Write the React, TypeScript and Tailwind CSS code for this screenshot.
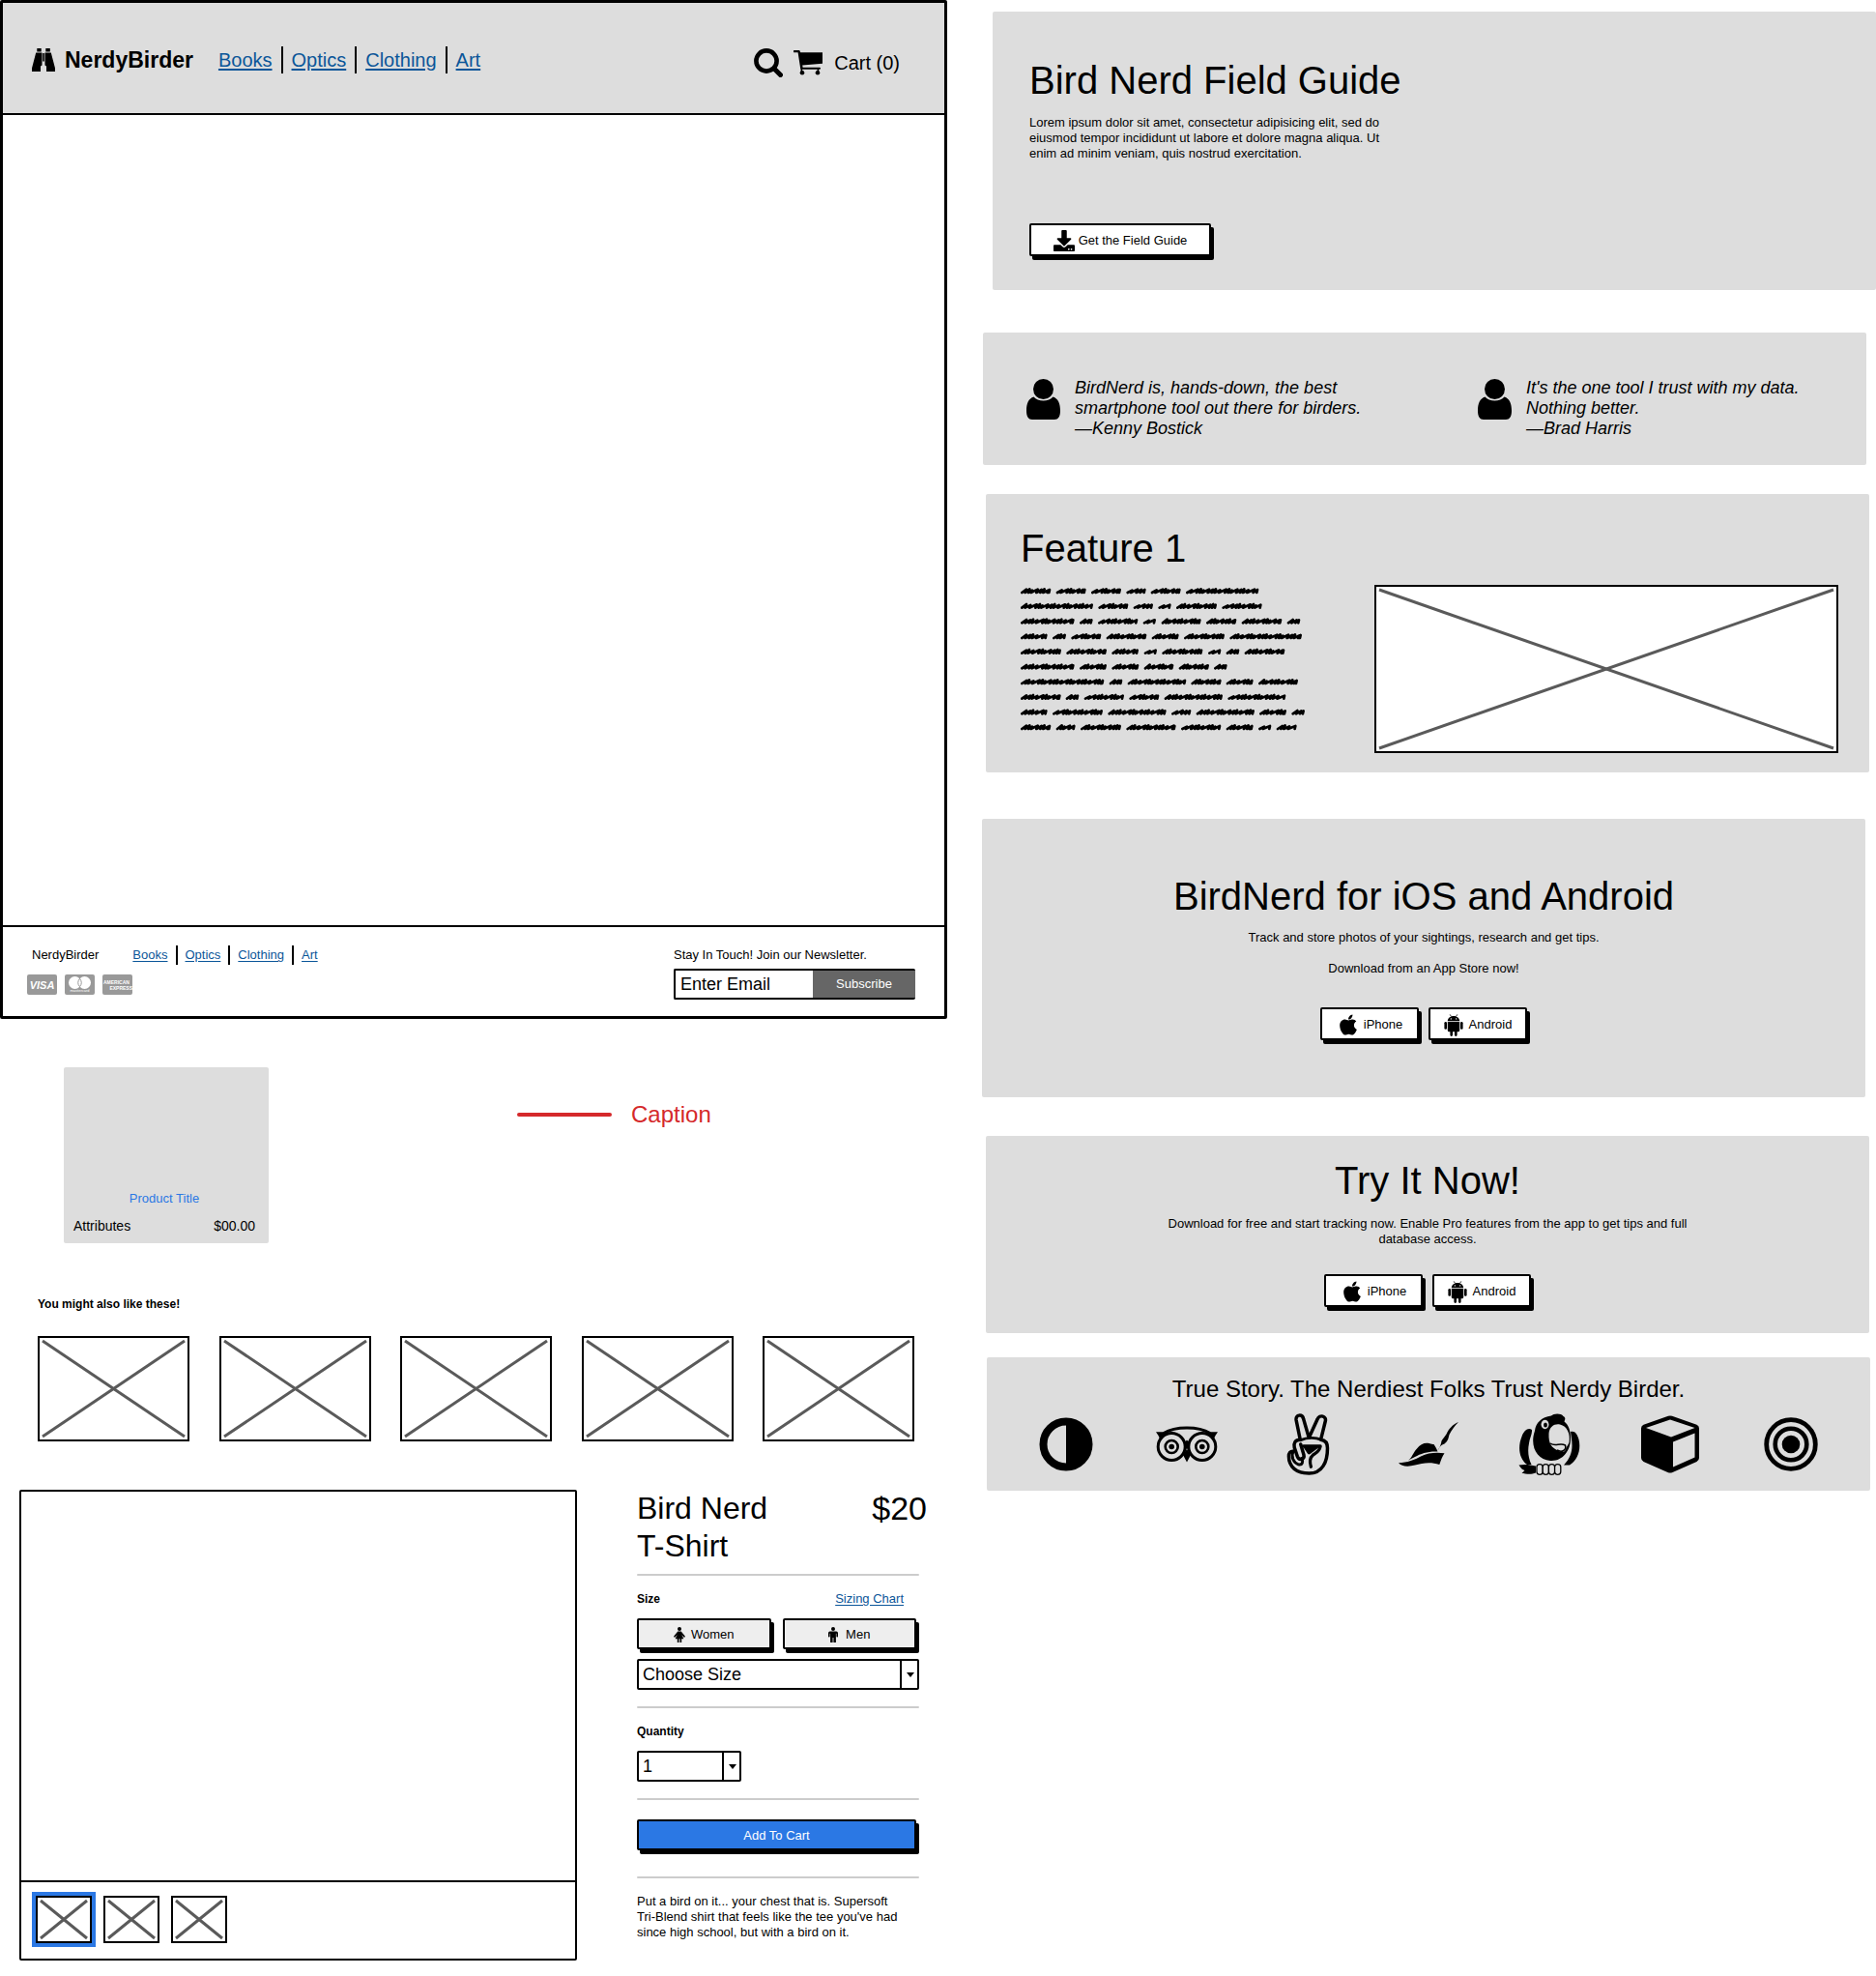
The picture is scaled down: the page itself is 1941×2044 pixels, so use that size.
import type { ReactNode } from "react";
import { FaApple, FaDownload } from "react-icons/fa";

const categories = ["Books", "Optics", "Clothing", "Art"];

function BinocularsIcon() {
  return (
    <svg viewBox="0 0 24 24" className="size-6" fill="currentColor" aria-hidden="true">
      <path d="M5.300 0h4.400v3.500H5.300zM14.300 0h4.500v3.500h-4.500z" />
      <path d="M4.200 4.500h6.300V17.500L9 18.500V24H0v-3.600Z" />
      <path d="M19.800 4.500h-6.300V17.500l1.500 1V24h9v-3.600Z" />
      <path d="M11 5h2v8.500h-2z" fillOpacity="0.8" />
    </svg>
  );
}

function SearchIcon() {
  return (
    <svg viewBox="0 0 30 30" className="size-[30px]" fill="none" stroke="currentColor" strokeLinecap="round" aria-hidden="true">
      <circle cx="13" cy="13" r="10.600" strokeWidth="4.600" />
      <path d="M21 21l6.500 6.500" strokeWidth="5" />
    </svg>
  );
}

function CartIcon() {
  return (
    <svg viewBox="0 0 30 26" className="h-[26px] w-[30px]" fill="currentColor" aria-hidden="true">
      <path d="M0.800 0h5.400l1 2.200H30v11.600L9.200 15.600l.4 2.200H27a1 1 0 0 1 0 2H8.200a1 1 0 0 1-1-.9L4.600 2.200H.8A1.100 1.100 0 0 1 .8 0Z" />
      <path d="M7.600 19h1.600v3H7.600zM24.600 19h1.600v3h-1.600z" />
      <circle cx="9" cy="23.300" r="2.300" />
      <circle cx="25" cy="23.300" r="2.300" />
    </svg>
  );
}

function PersonIcon() {
  return (
    <svg viewBox="0 0 35 42" className="mt-px h-[42px] w-[35px] shrink-0" fill="currentColor" aria-hidden="true">
      <circle cx="17.500" cy="10.500" r="10.500" />
      <path d="M7.500 18.600c2.300 2.500 5.900 4 10 4s7.700-1.500 10-4c5.300 1.600 7.500 7 7.500 14.400 0 6-2.200 9-6 9H6c-3.800 0-6-3-6-9 0-7.400 2.200-12.800 7.500-14.400Z" />
    </svg>
  );
}

function AndroidIcon() {
  return (
    <svg viewBox="0 0 20 23" className="h-[23px] w-5" fill="currentColor" aria-hidden="true">
      <path d="M6.200 0.400l1.300 2.200M13.800 0.400l-1.300 2.200" stroke="currentColor" strokeWidth="0.800" />
      <path fillRule="evenodd" d="M3.800 7.300C3.800 4.300 6.500 2 10 2s6.200 2.300 6.200 5.300ZM7.300 4.200a.7.7 0 1 0 0 1.400.7.7 0 0 0 0-1.400Zm5.400 0a.7.7 0 1 0 0 1.400.7.7 0 0 0 0-1.400Z" />
      <path d="M3.800 8.100h12.400v8.700a1.500 1.500 0 0 1-1.500 1.500h-1.100v3.300a1.300 1.300 0 0 1-2.600 0v-3.300H9v3.300a1.300 1.300 0 0 1-2.600 0v-3.300H5.300a1.500 1.500 0 0 1-1.500-1.500Z" />
      <rect x="0.400" y="8" width="2.600" height="7.800" rx="1.300" />
      <rect x="17" y="8" width="2.600" height="7.800" rx="1.300" />
    </svg>
  );
}

function WomanIcon() {
  return (
    <svg viewBox="0 0 12 16" className="h-4 w-3" fill="currentColor" aria-hidden="true">
      <circle cx="6" cy="2" r="2" />
      <path d="M4.300 4.400h3.400L11.600 9.300a.8.8 0 0 1-1.300 1L8.300 7.900 10.400 12.300H8.200V16H6.500v-3.700h-1V16H3.800v-3.700H1.600L3.700 7.900 1.700 10.300a.8.8 0 0 1-1.300-1Z" />
    </svg>
  );
}

function ManIcon() {
  return (
    <svg viewBox="0 0 10 16" className="h-4 w-2.5" fill="currentColor" aria-hidden="true">
      <circle cx="5" cy="2" r="2" />
      <path d="M1.800 4.400h6.400A1.800 1.800 0 0 1 10 6.200v3.600a.8.8 0 0 1-1.600 0V6.800h-.5V16H5.400v-5h-.8v5H2.100V6.800h-.5v3a.8.8 0 0 1-1.600 0V6.200a1.800 1.800 0 0 1 1.800-1.800Z" />
    </svg>
  );
}

function HalfCircleMark() {
  return (
    <svg viewBox="0 0 56 56" className="size-14" aria-hidden="true">
      <circle cx="28" cy="28" r="23.500" fill="none" stroke="#000" strokeWidth="8" />
      <path d="M28 4a24 24 0 0 1 0 48Z" />
    </svg>
  );
}

function OwlMark() {
  return (
    <svg viewBox="0 0 64 38" className="h-[38px] w-16" aria-hidden="true">
      <g fill="none" stroke="#000">
        <circle cx="16.200" cy="21.500" r="14" strokeWidth="3" />
        <circle cx="47.800" cy="21.500" r="14" strokeWidth="3" />
        <circle cx="16.200" cy="21.500" r="6.500" strokeWidth="2.600" />
        <circle cx="47.800" cy="21.500" r="6.500" strokeWidth="2.600" />
        <path d="M8 7.500C20 0 44 0 56 7.500" strokeWidth="3" />
      </g>
      <circle cx="16.200" cy="21.500" r="2.800" />
      <circle cx="47.800" cy="21.500" r="2.800" />
      <path d="M0 6.300h12L4 14C3.500 11 1.500 8.500 0 6.300ZM64 6.300H52l8 7.700c.5-3 2.500-5.500 4-7.700Z" />
      <path d="M28 30l4 7.500 4-7.500-4-6ZM29 18l3-3.500 3 3.500-3 7Z" />
    </svg>
  );
}

function PeaceMark() {
  return (
    <svg viewBox="0 0 46 66" className="h-16 w-[45px]" fill="none" stroke="#000" strokeWidth="3.600" strokeLinejoin="round" strokeLinecap="round" aria-hidden="true">
      <path d="M14.500 28L10.200 7C9.400 1 16.800 0.500 18 6L23.800 26L33 6C35 0.800 43 2.800 41.300 8.500L36.500 28C41.500 28.500 43.600 31.500 43.600 37C43.600 52 38 64 24 64C10.500 64 2.300 57 2.300 46C2.300 42 4 40.300 7 40.500" />
      <path d="M14.500 28C9 28 7.300 32 8.300 36.500L11.500 46C13.500 51 19.500 49 18.300 44L15 33" />
      <path d="M7 40.500C4.500 46 7 52.500 12.500 54.500C17 55.500 18 51.500 16 48" strokeWidth="3" />
      <path d="M15 28.500C22 25.500 31 25.500 36.500 28" strokeWidth="3" />
      <path d="M18 35H36C35 41 31.500 42 28 44.500C24.500 47.500 24.500 52 26 57" strokeWidth="3.400" />
      <path d="M20 36H32L24 42Z" fill="#000" />
    </svg>
  );
}

function HatMark() {
  return (
    <svg viewBox="0 0 62 46" className="h-[46px] w-[62px]" aria-hidden="true">
      <path d="M62 0C56 2.500 52 7 49.500 12.500C47.500 15.500 46 17 44.500 19.500C44 23 43 26 40.200 29.500L41.500 28C43 24.500 45 23.500 47.500 22.500C51.500 19.500 51.500 16.500 52.500 13C55 8.500 58 3.500 62 0Z" />
      <path d="M10 39.500C14 37 15 31.500 19 27.500C22 23.500 26 21.500 30 21.800C33 22 34.500 23.500 36.500 23C38 25.500 39.500 27.500 40.500 30.500C31 30 23 32.500 17 36Z" />
      <path d="M0 42.300C9 42 17 39 23 35.500C31 31.500 40 31.300 47.500 32.300C45 36 44 39.500 42.300 44C34 41 25 42 17 44.500C10 46.500 3 46 0 42.300Z" />
    </svg>
  );
}

function ParrotMark() {
  return (
    <svg viewBox="0 0 64 64" className="size-16" aria-hidden="true">
      <path d="M14 17C10 14.500 6 17.500 3.500 24C-0.500 34 0 46 9 53L13.500 53C10 46 9.500 38 11 31C11.500 26 14.500 21 14 17Z" />
      <path d="M54 19C58 17.500 61 21 62.500 27C65 37 61.500 48 53 53.500H47C53 47 55.500 41 55.500 33C55.500 28 54.500 23 54 19Z" />
      <path d="M17 18C18 10 24 3.500 34 2.500C36.500 0 44 -0.500 46.500 3C49.500 4.500 48 7 47.500 8.500C52 12 54 18 54 25C54.500 38 46 50 33 49C19 48 11.500 34 17 18Z" />
      <path d="M31.500 21C32 13.500 37.500 10.500 43 11.500C50.500 13 54 21.500 52.500 30C51.500 33 49.500 34.500 49 37C48 41 43.500 40.500 40 38C35 35.500 31 32 31.500 21Z" fill="#ddd" />
      <path d="M33 31C38 35 43 30 48.500 33C50 38 45 41 40 38" fill="none" stroke="#000" strokeWidth="1.500" />
      <ellipse cx="27.500" cy="11.500" rx="4" ry="4.700" fill="#ddd" />
      <ellipse cx="28" cy="12" rx="1.900" ry="2.500" />
      <path d="M0.500 53.500C6 52.500 12 53 18 54.500V61.500C12 64 7 62 3.500 62L6.500 59C4 58.500 2.500 56.500 0.500 53.500Z" />
      <g fill="#ddd" stroke="#000" strokeWidth="1.300">
        <rect x="19" y="52.600" width="6.200" height="10.700" rx="3" />
        <rect x="25.200" y="52.600" width="6.200" height="10.700" rx="3" />
        <rect x="31.400" y="52.600" width="6.200" height="10.700" rx="3" />
        <rect x="37.600" y="52.600" width="6.200" height="10.700" rx="3" />
      </g>
    </svg>
  );
}

function CubeMark() {
  return (
    <svg viewBox="0 0 60 60" className="size-[60px]" aria-hidden="true">
      <path fillRule="evenodd" d="M28 0.800Q30 0 32 0.800L57.500 9.800Q60 11 60 13.500V44Q60 46.500 57.500 48L32 59.200Q30 60 28 59.200L2.500 48Q0 46.500 0 44V13.500Q0 11 2.500 9.800ZM5 13L31 22.500L55.500 13L30 4.500ZM33 27.500V53.500L55.500 43.500V18.500Z" />
    </svg>
  );
}

function TargetMark() {
  return (
    <svg viewBox="0 0 56 56" className="size-14" aria-hidden="true">
      <circle cx="28" cy="28" r="25.300" fill="none" stroke="#000" strokeWidth="4.800" />
      <circle cx="28" cy="28" r="16.300" fill="none" stroke="#000" strokeWidth="4.600" />
      <circle cx="28" cy="28" r="9.300" />
    </svg>
  );
}

/* Crossed-out box that stands for an image. */
function Placeholder({ className }: { className: string }) {
  return (
    <div className={"border-2 border-black bg-white p-[3px] " + className}>
      <svg className="block h-full w-full overflow-visible" aria-hidden="true">
        <line x1="0" y1="0" x2="100%" y2="100%" stroke="#5a5a5a" strokeWidth="3" />
        <line x1="0" y1="100%" x2="100%" y2="0" stroke="#5a5a5a" strokeWidth="3" />
      </svg>
    </div>
  );
}

function SketchButton({ className, children }: { className: string; children: ReactNode }) {
  return (
    <button
      type="button"
      className={
        "flex items-center justify-center rounded-xs border-2 border-black pt-0.5 text-[13px] leading-4 shadow-[3px_4px_0_0_#000] " +
        className
      }
    >
      {children}
    </button>
  );
}

function StoreButtons() {
  return (
    <div className="flex justify-center gap-2.5">
      <SketchButton className="h-[34px] w-[102px] gap-1 bg-white">
        <FaApple className="size-6" />
        iPhone
      </SketchButton>
      <SketchButton className="h-[34px] w-[102px] gap-1.5 bg-white">
        <AndroidIcon />
        Android
      </SketchButton>
    </div>
  );
}

function SketchSelect({ id, className, options }: { id: string; className: string; options: string[] }) {
  return (
    <div className={"relative h-8 " + className}>
      <select
        id={id}
        className="h-full w-full appearance-none rounded-xs border-2 border-black bg-white pr-5 pl-1 text-[18px] leading-6"
      >
        {options.map((o) => (
          <option key={o}>{o}</option>
        ))}
      </select>
      <span className="pointer-events-none absolute inset-y-0 right-0 flex w-5 items-center justify-center border-l-2 border-black">
        <svg viewBox="0 0 8 5" className="h-[5px] w-2" aria-hidden="true">
          <path d="M0 0h8L4 5Z" />
        </svg>
      </span>
    </div>
  );
}

const scribbleWords: [number, number][][] = [
  [[0, 94], [110, 203], [219, 312], [328, 389], [404, 497], [513, 739]],
  [[0, 225], [241, 334], [350, 411], [427, 467], [483, 609], [625, 749]],
  [[0, 167], [183, 224], [240, 364], [380, 420], [437, 560], [576, 670], [686, 811], [827, 868]],
  [[0, 83], [99, 141], [157, 250], [266, 391], [407, 491], [507, 633], [649, 873]],
  [[0, 126], [142, 267], [283, 366], [383, 423], [439, 565], [582, 622], [638, 679], [695, 820]],
  [[0, 167], [183, 267], [283, 367], [383, 475], [491, 585], [600, 641]],
  [[0, 259], [275, 316], [332, 514], [529, 623], [638, 722], [738, 861]],
  [[0, 125], [140, 181], [197, 321], [337, 430], [446, 627], [643, 823]],
  [[0, 83], [99, 255], [271, 452], [468, 529], [545, 726], [741, 825], [841, 882]],
  [[0, 94], [110, 170], [186, 312], [328, 482], [498, 622], [638, 722], [738, 778], [794, 857]],
];

const strides = [9, 13, 19, 10, 8, 17, 12];
const lifts = [4, 6, 3, 5, 6, 2, 5];

function scribblePath() {
  let d = "";
  scribbleWords.forEach((line, row) => {
    const y = 19 + row * 47;
    line.forEach(([start, end]) => {
      let x = start + 4;
      let i = end - start;
      d += `M${x} ${y + 5}`;
      while (x + 20 <= end) {
        d += `L${x + 14} ${y - lifts[i % lifts.length]}L${x + 10} ${y + 5}`;
        x += strides[i % strides.length];
        i += 1;
      }
      d += `L${end - 4} ${y - 4}L${end - 6} ${y + 5}`;
    });
  });
  return d;
}

function Scribble() {
  return (
    <svg viewBox="0 0 885 465" className="mr-[71px] w-[295px] shrink-0 self-start" role="img" aria-label="Feature text">
      <path d={scribblePath()} fill="none" stroke="#000" strokeWidth="8" strokeLinecap="round" strokeLinejoin="round" />
    </svg>
  );
}

function PaymentCards() {
  return (
    <div className="mt-2.5 -ml-px flex gap-2 pl-1 text-white">
      <span className="-ml-1 flex h-[21px] w-[31px] items-center justify-center rounded-xs bg-[#999] text-[11px] leading-3 font-bold italic">
        VISA
      </span>
      <span className="flex h-[21px] w-[31px] flex-col items-center rounded-xs bg-[#999] pt-0.5">
        <svg viewBox="0 0 23 13" className="h-[13px] w-[23px] shrink-0" aria-hidden="true">
          <circle cx="6.500" cy="6.500" r="6.500" fill="#fff" />
          <circle cx="16.500" cy="6.500" r="6.500" fill="#fff" />
          <path d="M11.500 2.300a6.500 6.500 0 0 1 0 8.400a6.500 6.500 0 0 1 0-8.400Z" fill="#fff" stroke="#999" />
        </svg>
        <span className="text-[4px] leading-[4px]">mastercard</span>
      </span>
      <span className="flex h-[21px] w-[31px] flex-col justify-center overflow-hidden rounded-xs bg-[#999] text-[5px] leading-[6px] font-bold">
        <span className="pl-px">AMERICAN</span>
        <span className="self-end">EXPRESS</span>
      </span>
    </div>
  );
}

function SiteFrame() {
  return (
    <div className="flex flex-col rounded-xs border-[3px] border-black bg-white">
      <header className="flex h-[116px] items-center justify-between border-b-2 border-black bg-[#ddd] pt-1 pr-[46px] pl-[30px]">
        <div className="flex items-center">
          <BinocularsIcon />
          <span className="ml-2.5 text-[23px] leading-7 font-bold">NerdyBirder</span>
          <nav className="ml-[17px] flex items-center divide-x-2 divide-black">
            {categories.map((c) => (
              <span key={c} className="px-[9px] text-[20px] leading-7">
                <a href="#" className="text-[#0b5699] underline underline-offset-2">
                  {c}
                </a>
              </span>
            ))}
          </nav>
        </div>
        <div className="flex items-center pt-1.5">
          <button type="button" aria-label="Search">
            <SearchIcon />
          </button>
          <a href="#" className="ml-[11px] flex items-center gap-3 text-[20px] leading-7">
            <CartIcon />
            Cart (0)
          </a>
        </div>
      </header>
      <main className="min-h-[838px]" />
      <footer className="flex h-[94px] items-start justify-between border-t-2 border-black pt-[19px] pr-[30px] pl-[26px] text-[13px] leading-5">
        <div>
          <div className="flex items-center pl-1">
            <span>NerdyBirder</span>
            <nav className="ml-[27px] flex items-center divide-x-2 divide-black">
              {categories.map((c) => (
                <span key={c} className="px-2">
                  <a href="#" className="text-[#0b5699] underline underline-offset-2">
                    {c}
                  </a>
                </span>
              ))}
            </nav>
          </div>
          <PaymentCards />
        </div>
        <form>
          <label htmlFor="email" className="block">
            Stay In Touch! Join our Newsletter.
          </label>
          <div className="mt-1 flex h-8 w-[250px] rounded-xs border-y-2 border-l-2 border-black">
            <input
              id="email"
              type="text"
              defaultValue="Enter Email"
              className="min-w-0 flex-1 px-[5px] text-[18px] leading-6 outline-none"
            />
            <button type="button" className="w-[106px] bg-[#666] text-white">
              Subscribe
            </button>
          </div>
        </form>
      </footer>
    </div>
  );
}

function ProductCardRow() {
  return (
    <div className="mt-[50px] flex items-start pl-[66px]">
      <article className="w-[212px] rounded-xs bg-[#ddd] pt-[126px] pr-3.5 pb-2 pl-2.5">
        <h3 className="text-center text-[13px] leading-5 text-[#2b78e4]">Product Title</h3>
        <div className="mt-2 flex justify-between text-[14px] leading-5">
          <span>Attributes</span>
          <span>$00.00</span>
        </div>
      </article>
      <div className="mt-[37px] ml-[257px] flex items-center gap-5 text-[#d5292b]">
        <span className="h-1 w-[98px] rounded-full bg-[#d5292b]" />
        <span className="text-[24px] leading-6">Caption</span>
      </div>
    </div>
  );
}

function Related() {
  return (
    <section className="mt-[53px] pr-[34px] pl-[39px]">
      <h3 className="text-[12px] leading-5 font-bold">You might also like these!</h3>
      <div className="mt-[23px] flex justify-between">
        {[1, 2, 3, 4, 5].map((n) => (
          <Placeholder key={n} className="h-[109px] w-[157px]" />
        ))}
      </div>
    </section>
  );
}

function Rule({ className }: { className: string }) {
  return <hr className={"h-0.5 rounded-full border-0 bg-[#ccc] " + className} />;
}

function ProductDetail() {
  return (
    <section className="mt-[50px] mb-4 flex items-start pr-[29px] pl-5">
      <div className="mr-[62px] flex h-[487px] flex-1 flex-col rounded-xs border-2 border-black bg-white">
        <div className="flex-1" />
        <div className="flex h-[81px] gap-3 border-t-2 border-black pt-3.5 pl-[15px]">
          <Placeholder className="h-[49px] w-[58px] ring-4 ring-[#2b78e4]" />
          <Placeholder className="h-[49px] w-[58px]" />
          <Placeholder className="h-[49px] w-[58px]" />
        </div>
      </div>
      <div className="w-[292px]">
        <div className="-mr-2 flex items-start justify-between leading-[39px]">
          <h2 className="text-[32px]">
            Bird Nerd
            <br />
            T-Shirt
          </h2>
          <span className="text-[34px]">$20</span>
        </div>
        <Rule className="mt-[9px]" />
        <div className="mt-3.5 flex justify-between pr-4 text-[13px] leading-5">
          <label htmlFor="size" className="text-[12px] font-bold">
            Size
          </label>
          <a href="#" className="text-[#0b5699] underline underline-offset-2">
            Sizing Chart
          </a>
        </div>
        <div className="mt-2.5 flex gap-3 pr-[3px]">
          <SketchButton className="h-8 flex-1 gap-1.5 bg-[#eee]">
            <WomanIcon />
            Women
          </SketchButton>
          <SketchButton className="h-8 flex-1 gap-2 bg-[#eee]">
            <ManIcon />
            Men
          </SketchButton>
        </div>
        <SketchSelect id="size" className="mt-2.5 w-full" options={["Choose Size", "Small", "Medium", "Large"]} />
        <Rule className="mt-[17px]" />
        <label htmlFor="quantity" className="mt-3.5 block text-[12px] leading-5 font-bold">
          Quantity
        </label>
        <SketchSelect id="quantity" className="mt-2.5 w-[108px]" options={["1", "2", "3"]} />
        <Rule className="mt-[17px]" />
        <div className="mt-5 pr-[3px]">
          <SketchButton className="h-8 w-full bg-[#2b78e4] text-white">Add To Cart</SketchButton>
        </div>
        <Rule className="mt-[27px]" />
        <p className="mt-4 text-[13px] leading-4">
          Put a bird on it... your chest that is. Supersoft
          <br />
          Tri-Blend shirt that feels like the tee you've had
          <br />
          since high school, but with a bird on it.
        </p>
      </div>
    </section>
  );
}

const trustMarks = [
  { name: "Contrast", icon: <HalfCircleMark /> },
  { name: "Owl", icon: <OwlMark /> },
  { name: "Peace", icon: <PeaceMark /> },
  { name: "Hat", icon: <HatMark /> },
  { name: "Parrot", icon: <ParrotMark /> },
  { name: "Cube", icon: <CubeMark /> },
  { name: "Target", icon: <TargetMark /> },
];

function Quote({ lines }: { lines: string[] }) {
  return (
    <figure className="flex gap-[15px]">
      <PersonIcon />
      <blockquote className="text-[18px] leading-[21px] italic">
        {lines.map((l) => (
          <p key={l}>{l}</p>
        ))}
      </blockquote>
    </figure>
  );
}

export default function App() {
  return (
    <div className="flex items-start gap-9 bg-white text-black [font-family:'Liberation_Sans',Arial,sans-serif]">
      <div className="min-w-0 flex-[980]">
        <SiteFrame />
        <ProductCardRow />
        <Related />
        <ProductDetail />
      </div>

      <div className="min-w-0 flex-[925]">
        <section className="mt-3 ml-[11px] rounded-xs bg-[#ddd] pt-[47px] pb-[35px] pl-[38px]">
          <h1 className="text-[40px] leading-[48px]">Bird Nerd Field Guide</h1>
          <p className="mt-3 text-[13px] leading-4">
            Lorem ipsum dolor sit amet, consectetur adipisicing elit, sed do
            <br />
            eiusmod tempor incididunt ut labore et dolore magna aliqua. Ut
            <br />
            enim ad minim veniam, quis nostrud exercitation.
          </p>
          <SketchButton className="mt-16 h-[34px] w-[188px] gap-1 bg-white">
            <FaDownload className="size-[22px]" />
            Get the Field Guide
          </SketchButton>
        </section>

        <section className="mt-11 mr-2.5 ml-px grid grid-cols-[467fr_402fr] rounded-xs bg-[#ddd] pt-[47px] pb-[27px] pl-[45px]">
          <Quote lines={["BirdNerd is, hands-down, the best", "smartphone tool out there for birders.", "—Kenny Bostick"]} />
          <Quote lines={["It's the one tool I trust with my data.", "Nothing better.", "—Brad Harris"]} />
        </section>

        <section className="mt-[30px] mr-[7px] ml-1 rounded-xs bg-[#ddd] pt-8 pr-8 pb-5 pl-9">
          <h2 className="text-[40px] leading-[48px]">Feature 1</h2>
          <div className="mt-3.5 flex">
            <Scribble />
            <Placeholder className="h-[174px] flex-1" />
          </div>
        </section>

        <section className="mt-12 mr-[11px] rounded-xs bg-[#ddd] pt-14 pb-[59px] text-center">
          <h2 className="text-[40px] leading-[48px]">BirdNerd for iOS and Android</h2>
          <p className="mt-[11px] text-[13px] leading-4">Track and store photos of your sightings, research and get tips.</p>
          <p className="mt-4 mb-8 text-[13px] leading-4">Download from an App Store now!</p>
          <StoreButtons />
        </section>

        <section className="mt-10 mr-[7px] ml-1 rounded-xs bg-[#ddd] pt-[22px] pb-[27px] text-center">
          <h2 className="text-[40px] leading-[48px]">Try It Now!</h2>
          <p className="mt-[13px] mb-7 text-[13px] leading-4">
            Download for free and start tracking now. Enable Pro features from the app to get tips and full
            <br />
            database access.
          </p>
          <StoreButtons />
        </section>

        <section className="mt-[25px] mr-1.5 ml-[5px] rounded-xs bg-[#ddd] px-5 pt-[17px] pb-4">
          <h2 className="text-center text-[24px] leading-8">True Story. The Nerdiest Folks Trust Nerdy Birder.</h2>
          <ul className="mt-[9px] flex h-16 items-center">
            {trustMarks.map((m) => (
              <li key={m.name} aria-label={m.name} className="flex flex-1 justify-center">
                {m.icon}
              </li>
            ))}
          </ul>
        </section>
      </div>
    </div>
  );
}
